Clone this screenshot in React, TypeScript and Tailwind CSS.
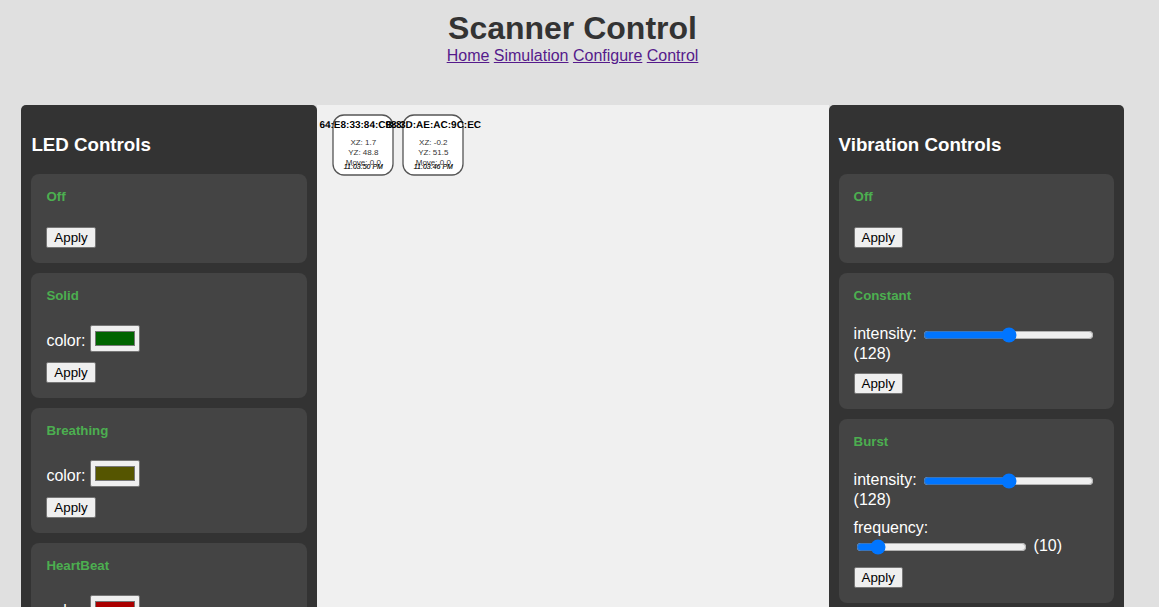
import { useState } from "react";

type Param = { name: string; kind: "color" | "range"; value: string; inline?: boolean };
type Effect = { title: string; params: Param[] };

const ledEffects: Effect[] = [
  { title: "Off", params: [] },
  { title: "Solid", params: [{ name: "color", kind: "color", value: "#006400" }] },
  { title: "Breathing", params: [{ name: "color", kind: "color", value: "#555500" }] },
  { title: "HeartBeat", params: [{ name: "color", kind: "color", value: "#aa0000" }] },
];

const vibrationEffects: Effect[] = [
  { title: "Off", params: [] },
  { title: "Constant", params: [{ name: "intensity", kind: "range", value: "128", inline: true }] },
  {
    title: "Burst",
    params: [
      { name: "intensity", kind: "range", value: "128", inline: true },
      { name: "frequency", kind: "range", value: "10" },
    ],
  },
];

const scanners = [
  { x: 16, id: "64:E8:33:84:CB:88", xz: "1.7", yz: "48.8", time: "11:03:50 PM" },
  { x: 86, id: "98:3D:AE:AC:9C:EC", xz: "-0.2", yz: "51.5", time: "11:03:46 PM" },
];

function ColorRow({ name, value }: Param) {
  const [color, setColor] = useState(value);
  return (
    <label className="mb-[10px] flex h-[27px] items-start">
      <span className="mt-[7px] w-[44px] leading-[18px]">{name}:</span>
      <input
        type="color"
        value={color}
        onChange={(e) => setColor(e.target.value)}
        className="h-[27px] w-[50px] rounded-[2px] border border-[#767676] bg-[#efefef] px-[2px] py-px"
      />
    </label>
  );
}

function RangeRow({ name, value, inline }: Param) {
  const [level, setLevel] = useState(value);
  const slider = (
    <input
      type="range"
      min={inline ? 0 : 1}
      max={inline ? 255 : 100}
      value={level}
      onChange={(e) => setLevel(e.target.value)}
      className="h-4 w-[171px]"
    />
  );
  if (inline) {
    return (
      <div className="mb-[9px] flex h-[39px] flex-col">
        <label className="flex h-5 items-start">
          <span className="w-[69.5px] leading-[18px]">{name}:</span>
          <span className="flex pt-[2px]">{slider}</span>
        </label>
        <span className="leading-[18px]">({level})</span>
      </div>
    );
  }
  return (
    <div className="mb-[10px] flex h-[38px] flex-col">
      <span className="leading-[18px]">{name}:</span>
      <div className="flex h-5 items-start pl-[2px]">
        <span className="flex pt-[2px]">{slider}</span>
        <span className="ml-[7px] leading-[18px]">({level})</span>
      </div>
    </div>
  );
}

function EffectCard({ title, params }: Effect) {
  return (
    <section className="rounded-lg bg-[#444] p-[15px]">
      <h4
        className={`text-[13.28px] font-bold leading-[15px] text-[#4caf50] ${params.length ? "mb-[22px]" : "mb-[23px]"}`}
      >
        {title}
      </h4>
      {params.map((p) => (p.kind === "color" ? <ColorRow key={p.name} {...p} /> : <RangeRow key={p.name} {...p} />))}
      <button className="block h-[21px] w-[49.3px] rounded-[2px] border border-[#767676] bg-[#efefef] text-[13.333px] leading-[15px] text-black">
        Apply
      </button>
    </section>
  );
}

function Panel({ title, effects }: { title: string; effects: Effect[] }) {
  return (
    <aside className="w-[295.5px] shrink-0 rounded-t-[5px] bg-[#333] px-[10px] pt-[29px]">
      <h3 className="mb-[18px] text-[18.72px] font-bold leading-[22px]">{title}</h3>
      <div className="flex flex-col gap-[10px]">
        {effects.map((e) => (
          <EffectCard key={e.title} {...e} />
        ))}
      </div>
    </aside>
  );
}

export default function App() {
  return (
    <div className="flex h-[607px] flex-col overflow-hidden bg-[#e0e0e0] font-['Liberation_Sans',Arial,sans-serif] text-base text-white">
      <header className="flex h-[105px] w-[1145px] shrink-0 flex-col items-center pt-[10px]">
        <h1 className="text-[32px] font-bold leading-[37px] text-[#333]">Scanner Control</h1>
        <nav className="flex gap-[4.45px] leading-[18px] text-[#551a8b]">
          <a className="underline" href="#home">Home</a>
          <a className="underline" href="#simulation">Simulation</a>
          <a className="underline" href="#configure">Configure</a>
          <a className="underline" href="#control">Control</a>
        </nav>
      </header>
      <main className="ml-[21.4px] flex min-h-0 flex-1 items-stretch">
        <Panel title="LED Controls" effects={ledEffects} />
        <div className="w-[511.7px] shrink-0 bg-[#f0f0f0]">
          <svg width="511" height="502" viewBox="0 0 511 502" textAnchor="middle" className="block">
            {scanners.map((s) => (
              <g key={s.id} transform={`translate(${s.x} 10)`}>
                <rect width="60" height="60" rx="11" fill="white" stroke="#555" strokeWidth="1.3" />
                <text x="30.3" y="13" fontSize="10" fontWeight="bold" fill="#000" textRendering="geometricPrecision">{s.id}</text>
                <text x="30.3" y="30" fontSize="8" fill="#333">XZ: {s.xz}</text>
                <text x="30.3" y="40" fontSize="8" fill="#333">YZ: {s.yz}</text>
                <text x="30.3" y="50" fontSize="8" fill="#333">Move: 0.0</text>
                <text x="30.3" y="54" fontSize="7" fontStyle="italic" fill="#000" stroke="#000" strokeWidth="0.15">{s.time}</text>
              </g>
            ))}
          </svg>
        </div>
        <Panel title="Vibration Controls" effects={vibrationEffects} />
      </main>
    </div>
  );
}
